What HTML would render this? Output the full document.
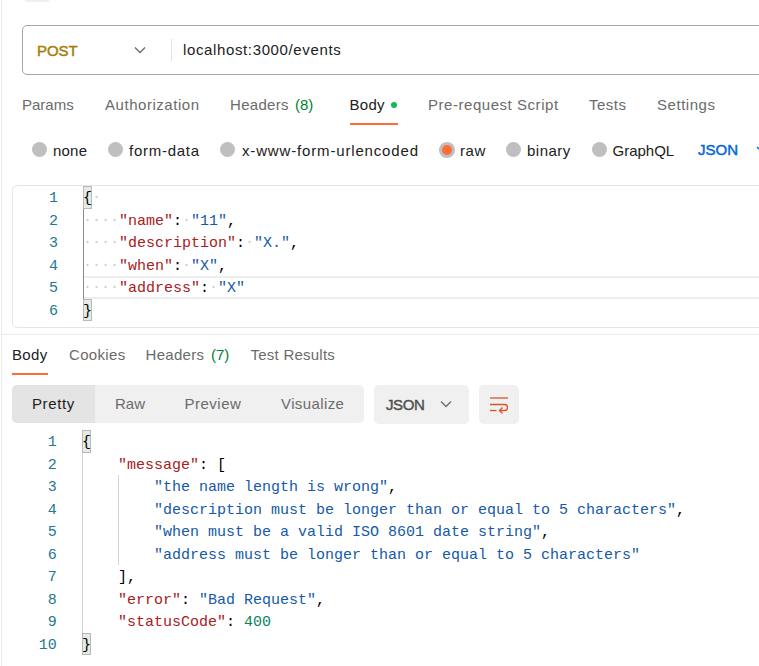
<!DOCTYPE html>
<html><head><meta charset="utf-8">
<style>
html,body{margin:0;padding:0;background:#fff;width:759px;height:666px;overflow:hidden;position:relative}
*{box-sizing:border-box}
.a{position:absolute;white-space:pre}
.s{font-family:"Liberation Sans",sans-serif;font-size:15px;line-height:20px;color:#6b6b6b}
.m{font-family:"Liberation Mono",monospace;font-size:15px;line-height:22.5px;color:#000}
.ln{position:absolute;left:18.8px;width:38px;text-align:right;color:#237893;font-family:"Liberation Mono",monospace;font-size:15px;line-height:22.5px}
.k{color:#a82020}
.v{color:#1559a8}
.n{color:#098658}
.d{color:#cfcfcf;position:relative;top:-0.8px}
.radio{position:absolute;width:15px;height:15px;border-radius:50%;background:#bfbfbf}
.bb{position:absolute;left:82px;width:9px;height:22.5px;background:#e4ebe3;border:1px solid #b8b8b8}
.code{position:absolute;left:82px}
</style></head><body>
<!-- left border -->
<div class="a" style="left:1px;top:0;width:1px;height:666px;background:#ebebeb"></div>
<!-- tiny top rect -->
<div class="a" style="left:24px;top:-4px;width:26px;height:6px;border-radius:3px;background:#efefef"></div>

<!-- URL bar -->
<div class="a" style="left:22px;top:25px;width:760px;height:50px;border:1px solid #a6a6a6;border-radius:5px"></div>
<div class="a s" style="left:37px;top:40.5px;color:#a87b09;-webkit-text-stroke:0.45px #a87b09;letter-spacing:-0.1px">POST</div>
<svg class="a" style="left:133px;top:45px" width="14" height="10" viewBox="0 0 14 10"><path d="M2 2.5 L7 7.5 L12 2.5" fill="none" stroke="#6b6b6b" stroke-width="1.3"/></svg>
<div class="a" style="left:171px;top:39px;width:1px;height:22px;background:#e3e3e3"></div>
<div class="a s" style="left:183px;top:40px;color:#212121;letter-spacing:0.63px">localhost:3000/events</div>

<!-- request tabs -->
<div class="a s" style="left:22px;top:95px">Params</div>
<div class="a s" style="left:105px;top:95px;letter-spacing:0.54px">Authorization</div>
<div class="a s" style="left:230px;top:95px;letter-spacing:0.3px">Headers</div>
<div class="a s" style="left:295px;top:95px;color:#007f31">(8)</div>
<div class="a s" style="left:349.5px;top:95px;color:#212121;letter-spacing:0.3px">Body</div>
<div class="a" style="left:391px;top:101.8px;width:6px;height:6px;border-radius:50%;background:#0cbb52"></div>
<div class="a" style="left:350px;top:123px;width:48px;height:2px;background:#ff6c37"></div>
<div class="a s" style="left:428px;top:95px;letter-spacing:0.54px">Pre-request Script</div>
<div class="a s" style="left:589px;top:95px;letter-spacing:0.5px">Tests</div>
<div class="a s" style="left:657px;top:95px;letter-spacing:0.54px">Settings</div>

<!-- body type radios -->
<div class="radio" style="left:32px;top:142px"></div>
<div class="a s" style="left:53px;top:141px;color:#212121;letter-spacing:0.2px">none</div>
<div class="radio" style="left:108px;top:142px"></div>
<div class="a s" style="left:129px;top:141px;color:#212121;letter-spacing:0.74px">form-data</div>
<div class="radio" style="left:220px;top:142px"></div>
<div class="a s" style="left:242px;top:141px;color:#212121;letter-spacing:0.84px">x-www-form-urlencoded</div>
<div class="a" style="left:439px;top:141.5px;width:16px;height:16px;border-radius:50%;background:#bfbfbf"></div>
<div class="a" style="left:442px;top:144.5px;width:10px;height:10px;border-radius:50%;background:#ff6c37"></div>
<div class="a s" style="left:460px;top:141px;color:#212121;letter-spacing:0.6px">raw</div>
<div class="radio" style="left:506px;top:142px"></div>
<div class="a s" style="left:527px;top:141px;color:#212121;letter-spacing:0.5px">binary</div>
<div class="radio" style="left:591.5px;top:142px"></div>
<div class="a s" style="left:612.5px;top:141px;color:#212121">GraphQL</div>
<div class="a s" style="left:698px;top:140px;color:#0265d2;-webkit-text-stroke:0.45px #0265d2">JSON</div>
<svg class="a" style="left:755px;top:144px" width="12" height="10" viewBox="0 0 12 10"><path d="M2 3 L6 7 L10 3" fill="none" stroke="#0265d2" stroke-width="1.3"/></svg>

<!-- request editor -->
<div class="a" style="left:12px;top:185px;width:770px;height:143px;border:1px solid #e6e6e6;border-radius:5px"></div>
<div class="a" style="left:83px;top:208.7px;width:1px;height:90px;background:#8a8a8a"></div>
<div class="a" style="left:84px;top:276px;width:700px;height:23px;border-top:2px solid #eeeeee;border-bottom:2px solid #eeeeee"></div>
<div class="bb" style="top:186.2px;left:83px"></div>
<div class="bb" style="top:298.7px;left:83px"></div>
<div class="ln" style="top:188.2px;left:20px">1<br>2<br>3<br>4<br>5<br>6</div>
<div class="a m code" style="top:188.2px;left:83px">{<span class="d">·</span>
<span class="d">····</span><span class="k">"name"</span>:<span class="d">·</span><span class="v">"11"</span>,
<span class="d">····</span><span class="k">"description"</span>:<span class="d">·</span><span class="v">"X."</span>,
<span class="d">····</span><span class="k">"when"</span>:<span class="d">·</span><span class="v">"X"</span>,
<span class="d">····</span><span class="k">"address"</span>:<span class="d">·</span><span class="v">"X"</span>
}</div>

<!-- separator -->
<div class="a" style="left:1px;top:334px;width:760px;height:1px;background:#ebebeb"></div>

<!-- response tabs -->
<div class="a s" style="left:12px;top:344.8px;color:#212121;letter-spacing:0.35px">Body</div>
<div class="a" style="left:12px;top:373px;width:36px;height:2px;background:#ff6c37"></div>
<div class="a s" style="left:69px;top:344.8px;letter-spacing:0.33px">Cookies</div>
<div class="a s" style="left:145.5px;top:344.8px;letter-spacing:0.3px">Headers</div>
<div class="a s" style="left:211px;top:344.8px;color:#007f31">(7)</div>
<div class="a s" style="left:250.5px;top:344.8px;letter-spacing:0.24px">Test Results</div>

<!-- toolbar -->
<div class="a" style="left:12px;top:385px;width:352px;height:38px;border-radius:5px;background:#f0f0f0"></div>
<div class="a" style="left:12px;top:385px;width:83px;height:38px;border-radius:5px 0 0 5px;background:#e4e4e4"></div>
<div class="a s" style="left:32px;top:393.5px;color:#212121;letter-spacing:0.6px">Pretty</div>
<div class="a s" style="left:115px;top:393.5px">Raw</div>
<div class="a s" style="left:184.5px;top:393.5px;letter-spacing:0.5px">Preview</div>
<div class="a s" style="left:281px;top:393.5px;letter-spacing:0.4px">Visualize</div>
<div class="a" style="left:374px;top:385px;width:95px;height:39px;border-radius:5px;background:#f0f0f0"></div>
<div class="a s" style="left:386px;top:394.5px;color:#505050;-webkit-text-stroke:0.45px #505050;letter-spacing:-0.4px">JSON</div>
<svg class="a" style="left:439px;top:399px" width="14" height="10" viewBox="0 0 14 10"><path d="M2 2.5 L7 7.5 L12 2.5" fill="none" stroke="#6b6b6b" stroke-width="1.3"/></svg>
<div class="a" style="left:479px;top:385px;width:40px;height:39px;border-radius:5px;background:#f0f0f0"></div>
<svg class="a" style="left:479px;top:385px" width="40" height="40" viewBox="0 0 40 40"><g fill="none" stroke="#d9542a" stroke-width="1.3"><path d="M11 13H29"/><path d="M11 19.5H25.5A3 3 0 0 1 25.5 25.5H20.5"/><path d="M23.5 22.5L20.5 25.5L23.5 28.5"/><path d="M11 25.5H17.5"/></g></svg>

<!-- response editor -->
<div class="a" style="left:82px;top:452.7px;width:1px;height:180.5px;background:#d4d4d4"></div>
<div class="a" style="left:118px;top:475.2px;width:1px;height:90px;background:#d4d4d4"></div>
<div class="bb" style="top:430.2px"></div>
<div class="bb" style="top:632.7px"></div>
<div class="ln" style="top:432px">1<br>2<br>3<br>4<br>5<br>6<br>7<br>8<br>9<br>10</div>
<div class="a m code" style="top:432px">{
    <span class="k">"message"</span>: [
        <span class="v">"the name length is wrong"</span>,
        <span class="v">"description must be longer than or equal to 5 characters"</span>,
        <span class="v">"when must be a valid ISO 8601 date string"</span>,
        <span class="v">"address must be longer than or equal to 5 characters"</span>
    ],
    <span class="k">"error"</span>: <span class="v">"Bad Request"</span>,
    <span class="k">"statusCode"</span>: <span class="n">400</span>
}</div>
</body></html>
